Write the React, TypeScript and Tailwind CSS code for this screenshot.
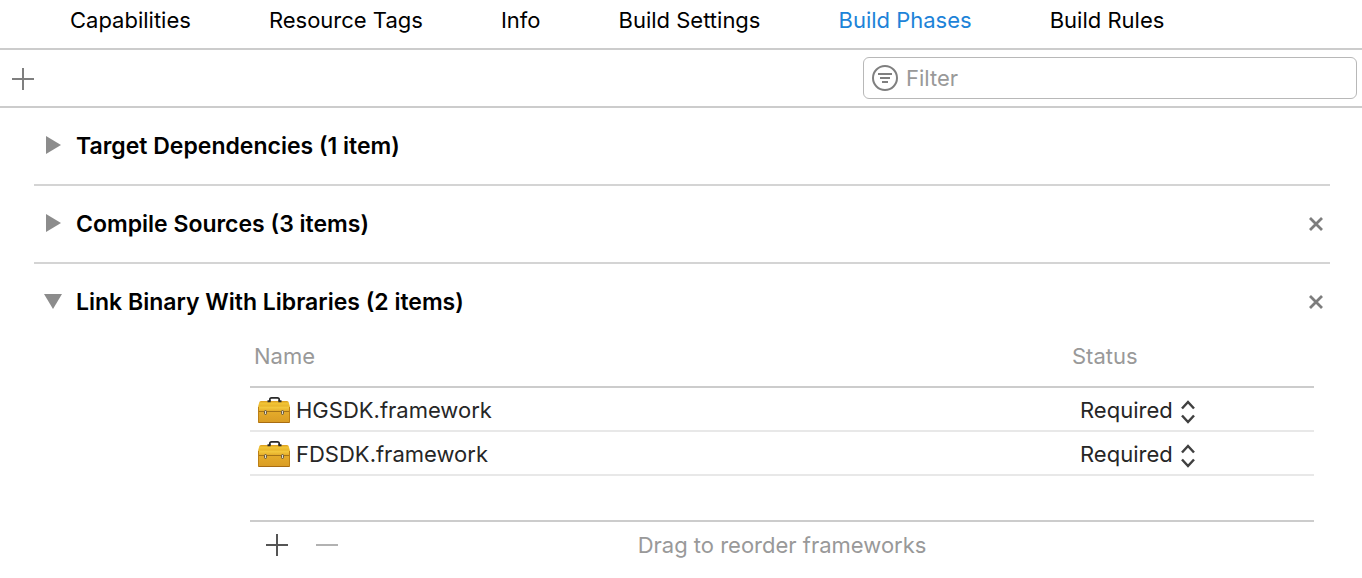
import React, { useState } from "react";

const tabs = ["Capabilities", "Resource Tags", "Info", "Build Settings", "Build Phases", "Build Rules"];
const frameworks = ["HGSDK.framework", "FDSDK.framework"];

function Plus() {
  return (
    <svg width="22" height="22" viewBox="0 0 22 22" fill="currentColor" aria-hidden="true">
      <path d="M10 0h2v22h-2zM0 10h22v2H0z" />
    </svg>
  );
}

function Minus() {
  return (
    <svg width="22" height="22" viewBox="0 0 22 22" fill="currentColor" aria-hidden="true">
      <path d="M0 10h22v2H0z" />
    </svg>
  );
}

function Cross() {
  return (
    <svg width="14" height="14" viewBox="0 0 14 14" fill="none" stroke="currentColor" strokeWidth="2.8" aria-hidden="true">
      <path d="M1 1l12 12M13 1L1 13" />
    </svg>
  );
}

function Disclosure({ open }: { open: boolean }) {
  return (
    <svg width="18" height="20" viewBox="0 0 18 20" fill="#8c8c8c" aria-hidden="true">
      <path d={open ? "M0 2h18L9 17z" : "M2 0l15 9L2 18z"} />
    </svg>
  );
}

function FilterIcon() {
  return (
    <svg width="26" height="26" viewBox="0 0 26 26" fill="none" stroke="#7f7f7f" strokeWidth="2" aria-hidden="true">
      <circle cx="13" cy="13" r="12" />
      <path d="M6 9h14M8 13h10M10 17h6" />
    </svg>
  );
}

function Toolbox() {
  return (
    <svg className="shrink-0" width="32" height="28" viewBox="0 0 32 28" aria-hidden="true">
      <defs>
        <linearGradient id="lid" x1="0" y1="0" x2="0" y2="1">
          <stop offset="0" stopColor="#d99a1c" />
          <stop offset="0.2" stopColor="#f2c535" />
          <stop offset="0.45" stopColor="#e9b62d" />
          <stop offset="0.6" stopColor="#f3c83e" />
          <stop offset="1" stopColor="#e0a524" />
        </linearGradient>
        <linearGradient id="box" x1="0" y1="0" x2="0" y2="1">
          <stop offset="0" stopColor="#e5ac2b" />
          <stop offset="1" stopColor="#d99c24" />
        </linearGradient>
      </defs>
      <path d="M3 5h26q1.500 0 1.900 1.800L32 11v5H0v-5l1.100-4.200Q1.500 5 3 5z" fill="url(#lid)" />
      <path d="M0 15h32v11q0 1-1 1H1q-1 0-1-1z" fill="url(#box)" />
      <path d="M11.800 5V3.600Q11.800 1.800 13.600 1.800h5.800Q21.200 1.800 21.200 3.600V5" fill="none" stroke="#2a2a2a" strokeWidth="1.700" />
      <path d="M9.500 5.200h3.200M20.300 5.200h3.200" stroke="#2a2a2a" strokeWidth="2" />
      <path d="M0.500 15.500h31" stroke="#a47318" strokeWidth="1" />
      <path d="M0.500 26.500h31" stroke="#a86c12" strokeWidth="1" />
      <path d="M0.500 11v15M31.500 11v15" stroke="#bd8015" strokeWidth="1" />
      <rect x="6.500" y="14.500" width="2" height="4" rx="1" fill="#e4dccb" stroke="#65563a" />
      <rect x="23.500" y="14.500" width="2" height="4" rx="1" fill="#e4dccb" stroke="#65563a" />
    </svg>
  );
}

function Stepper() {
  return (
    <svg width="14" height="24" viewBox="0 0 14 24" fill="none" stroke="#404040" strokeWidth="2.500" aria-hidden="true">
      <path d="M1 8.500L7 2l6 6.500M1 15.500L7 22l6-6.500" />
    </svg>
  );
}

function Phase({
  title,
  open,
  removable,
  divided,
  children,
}: {
  title: string;
  open?: boolean;
  removable?: boolean;
  divided?: boolean;
  children?: React.ReactNode;
}) {
  return (
    <section className={divided ? "border-b-2 border-[#d4d4d4]" : ""}>
      <div className="flex h-[76px] items-center justify-between pr-[7px] pl-[10px]">
        <h2 className="text-[23px] leading-7 font-semibold text-black">
          <button type="button" aria-expanded={!!open} className="flex items-center gap-[14px]">
            <Disclosure open={!!open} />
            {title}
          </button>
        </h2>
        {removable && (
          <button type="button" aria-label={"Remove " + title} className="text-[#7d7d7d]">
            <Cross />
          </button>
        )}
      </div>
      {children}
    </section>
  );
}

export default function App() {
  const [active, setActive] = useState("Build Phases");
  return (
    <main className="min-h-screen bg-white font-['Inter',sans-serif] text-[22px] leading-7 text-[#262626]">
      <nav className="flex h-[50px] gap-[78px] border-b-2 border-[#cccccc] pt-[6px] pl-[70px] whitespace-nowrap">
        {tabs.map((tab) => (
          <button
            key={tab}
            type="button"
            onClick={() => setActive(tab)}
            className={"h-7 " + (tab === active ? "text-[#1d83d8]" : "text-black")}
          >
            {tab}
          </button>
        ))}
      </nav>

      <div className="flex h-[58px] items-center justify-between border-b-2 border-[#cccccc] pr-[5px] pl-3">
        <button type="button" aria-label="Add phase" className="pt-[2px] text-[#7f7f7f]">
          <Plus />
        </button>
        <label className="flex h-[42px] w-[494px] items-center gap-2 rounded-md border border-[#b8b8b8] px-2">
          <FilterIcon />
          <input
            type="text"
            aria-label="Filter"
            placeholder="Filter"
            className="min-w-0 flex-1 bg-transparent outline-none placeholder:text-[#999999]"
          />
        </label>
      </div>

      <div className="pr-8 pl-[34px]">
        <Phase title="Target Dependencies (1 item)" divided />
        <Phase title="Compile Sources (3 items)" removable divided />
        <Phase title="Link Binary With Libraries (2 items)" open removable>
          <div className="pr-4 pl-[216px]">
            <table className="w-full table-fixed border-separate border-spacing-0 text-left">
              <colgroup>
                <col />
                <col className="w-[246px]" />
              </colgroup>
              <thead>
                <tr className="h-12 text-[#999999]">
                  <th className="border-b-2 border-[#cccccc] px-1 pt-0 pb-[14px] font-normal">Name</th>
                  <th className="border-b-2 border-[#cccccc] px-1 pt-0 pb-[14px] font-normal">Status</th>
                </tr>
              </thead>
              <tbody>
                {frameworks.map((name) => (
                  <tr key={name} className="h-11">
                    <td className="border-b-2 border-[#e8e8e8] px-2 pt-[2px] pb-0">
                      <div className="flex items-center gap-[6px]">
                        <Toolbox />
                        {name}
                      </div>
                    </td>
                    <td className="border-b-2 border-[#e8e8e8] px-3 pt-[2px] pb-0">
                      <label className="flex items-center gap-2">
                        <select aria-label={"Status of " + name} className="appearance-none bg-transparent outline-none">
                          <option>Required</option>
                          <option>Optional</option>
                        </select>
                        <span className="pt-1">
                          <Stepper />
                        </span>
                      </label>
                    </td>
                  </tr>
                ))}
              </tbody>
            </table>
            <div className="mt-11 flex items-center border-t-2 border-[#cccccc] px-4 pt-[9px]">
              <div className="flex flex-1 gap-7">
                <button type="button" aria-label="Add framework" className="text-[#555555]">
                  <Plus />
                </button>
                <button type="button" aria-label="Remove framework" className="text-[#b2b2b2]">
                  <Minus />
                </button>
              </div>
              <p className="text-[#999999]">Drag to reorder frameworks</p>
              <div className="flex-1" />
            </div>
          </div>
        </Phase>
      </div>
    </main>
  );
}
